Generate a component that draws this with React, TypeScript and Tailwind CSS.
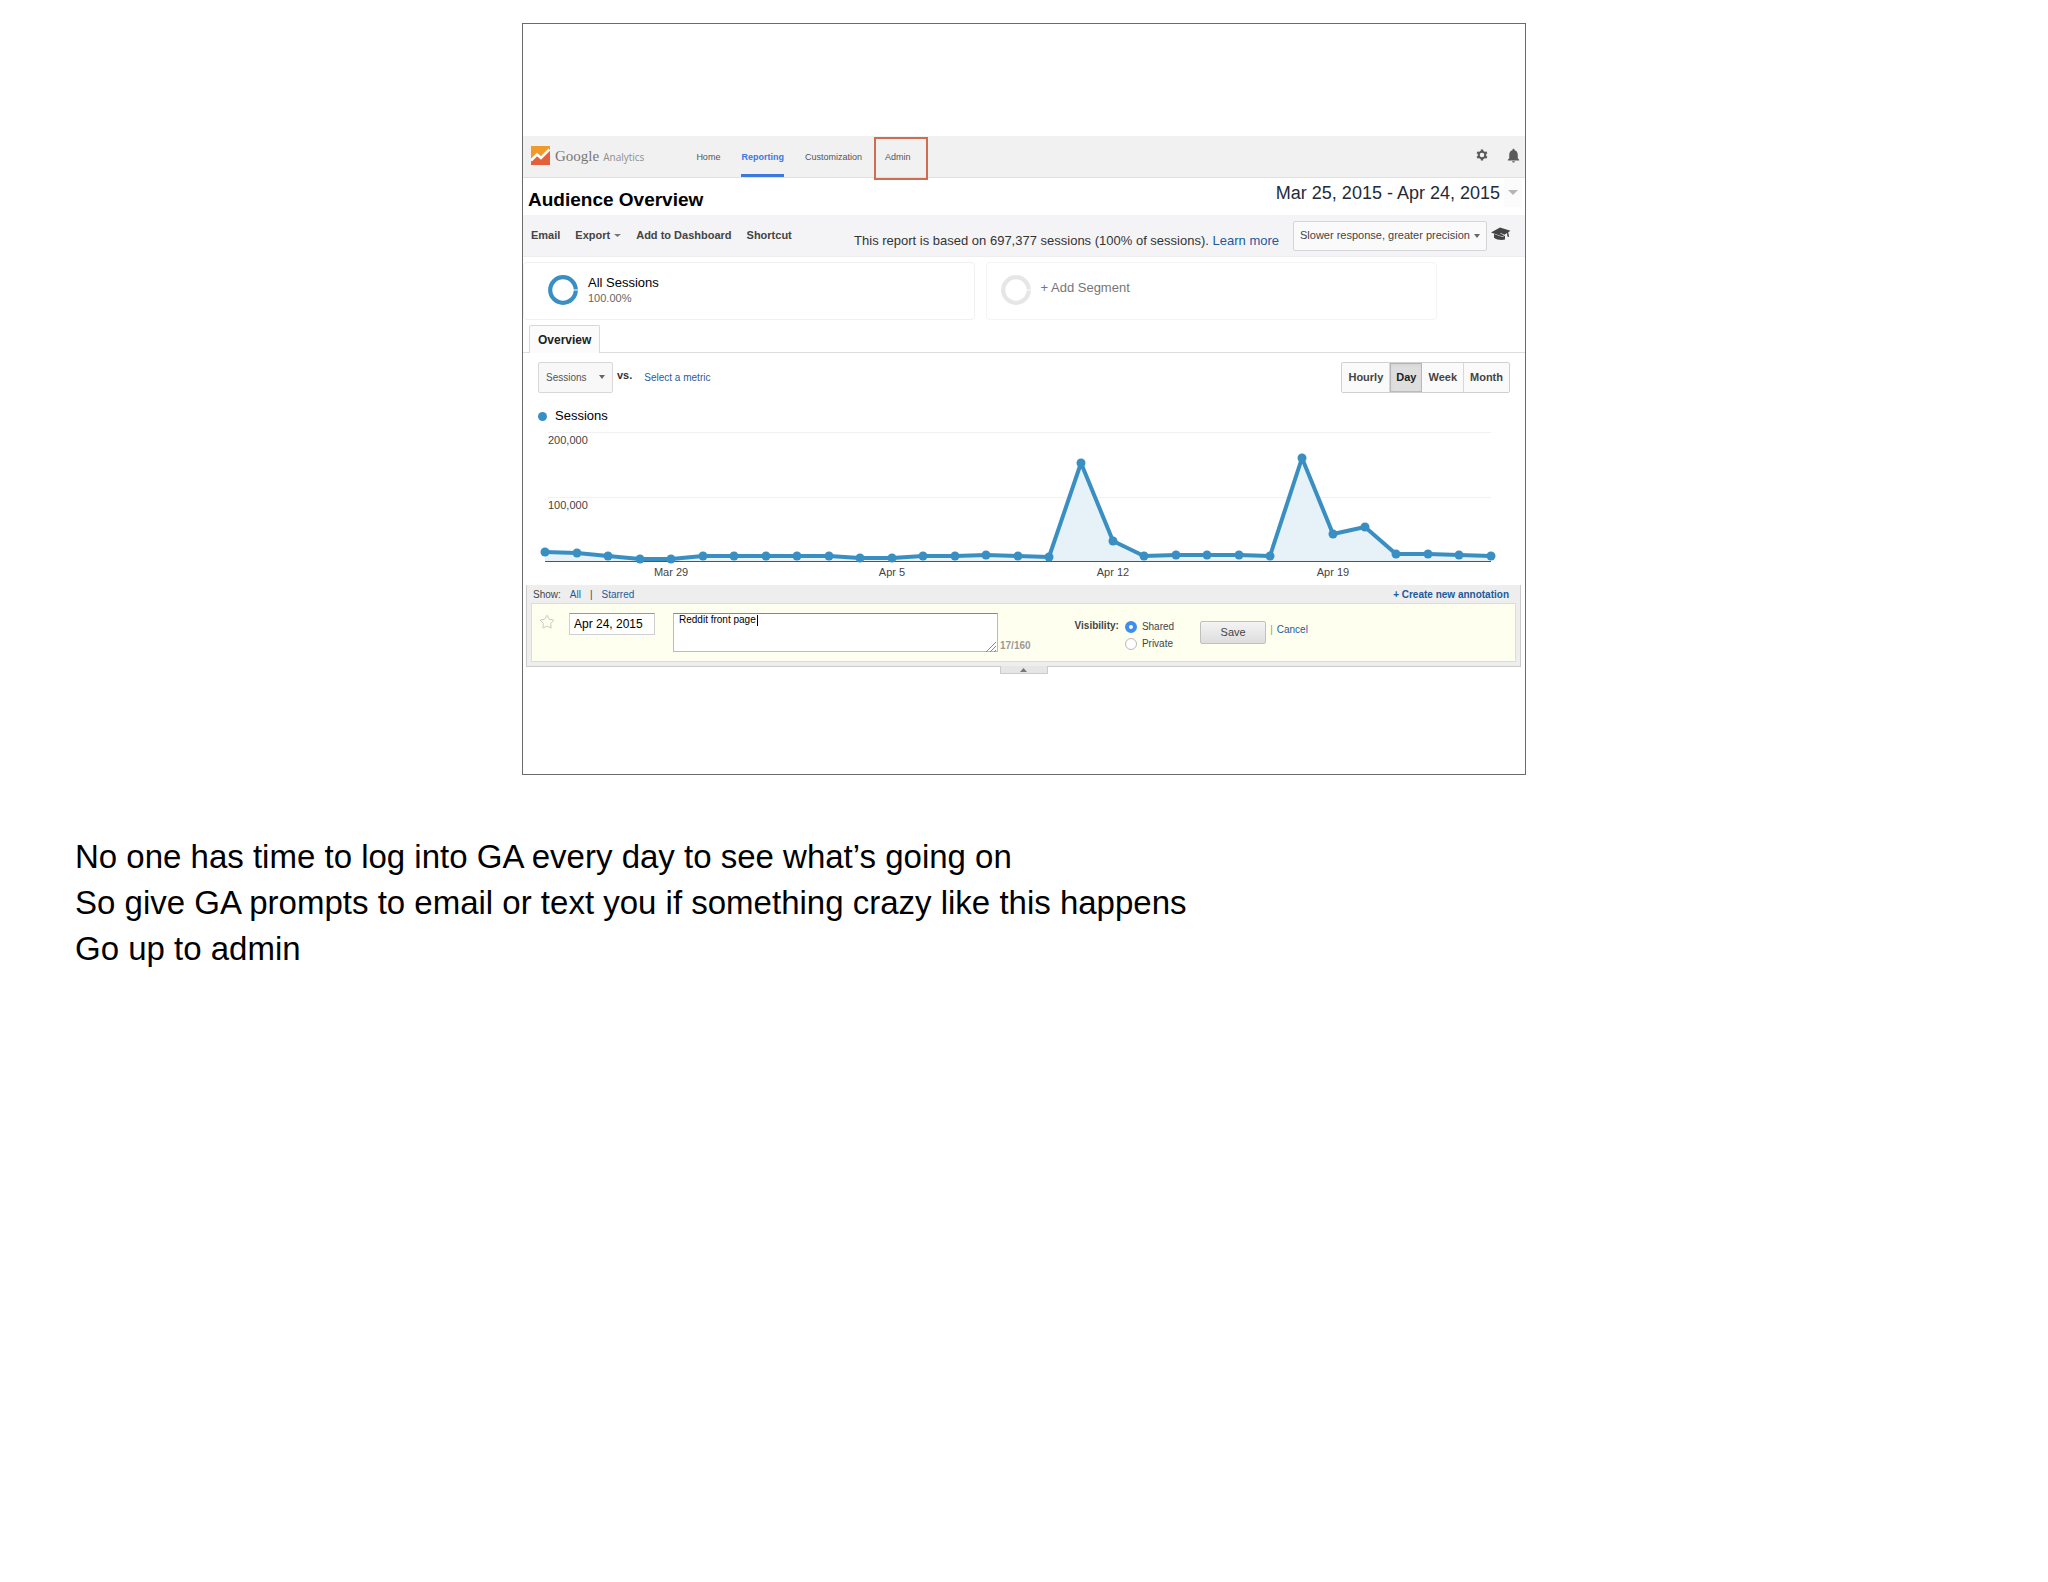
import { Star } from "lucide-react";
import { MdNotifications } from "react-icons/md";

const navItems = [
  { label: "Home", href: "#home" },
  { label: "Reporting", href: "#reporting", active: true },
  { label: "Customization", href: "#customization" },
];

const notes = [
  "No one has time to log into GA every day to see what’s going on",
  "So give GA prompts to email or text you if something crazy like this happens",
  "Go up to admin",
];

// daily sessions in thousands, Mar 25 to Apr 24
const sessions = [
  15, 14, 10, 4, 5, 10, 10, 9, 10, 10, 6, 6, 10, 10, 11, 10, 7, 154, 32, 10, 11, 11, 11, 9, 162, 43, 55, 12, 12, 11, 10,
];

const ticks = [
  { index: 4, label: "Mar 29" },
  { index: 11, label: "Apr 5" },
  { index: 18, label: "Apr 12" },
  { index: 25, label: "Apr 19" },
];

function Caret({ className }: { className: string }) {
  return (
    <svg viewBox="0 0 8 4" className={className} preserveAspectRatio="none" fill="currentColor" aria-hidden="true">
      <path d="M0 0h8L4 4z" />
    </svg>
  );
}

function Logo() {
  return (
    <a href="#top" className="flex items-center gap-[5px] pb-0.5">
      <svg viewBox="0 0 19 19" className="size-[19px]" aria-hidden="true">
        <path d="M0 0h19v19H0z" fill="#f09a2c" />
        <path d="M0 14.500 6 8.500l4 3.500 9-9v16H0z" fill="#e4603a" />
        <path d="M0 14.500 6 8.500l4 3.500 8.500-8.500" fill="none" stroke="#fff" strokeWidth="2.600" />
      </svg>
      <span className="flex items-baseline gap-1 text-[#777777]">
        <span className="font-['Liberation_Serif',serif] text-[15px] leading-5">Google</span>
        <span className="font-['Open_Sans',sans-serif] text-[10px] text-[#8f8f8f]">Analytics</span>
      </span>
    </a>
  );
}

function GearIcon() {
  return (
    <svg viewBox="0 0 12 12" className="size-3" stroke="currentColor" fill="none" aria-hidden="true">
      <circle cx="6" cy="6" r="3.300" strokeWidth="2" />
      <path
        d="M6 .4v2M6 9.600v2M1.150 3.200l1.730 1M9.120 7.800l1.730 1M1.150 8.800l1.730-1M9.120 4.200l1.730-1"
        strokeWidth="2.400"
      />
    </svg>
  );
}

function CapIcon() {
  return (
    <svg viewBox="0 0 20 14" className="h-[14px] w-5" fill="currentColor" aria-hidden="true">
      <path d="M0 5.500 9 .5l10.500 3.200-2.300 1.600 1 4.700-1.800-.6-.4-3.300-2.500 1.600-4-1.600-.3.500 3.800 1.600-1.500 1.300z" />
      <path d="m3 7 8.500 3 2.500-1.600v4.200c-3.500 1-8.500.2-11-1.800z" />
    </svg>
  );
}

function Header() {
  return (
    <header className="flex h-[42px] items-stretch border-b border-[#e0e0e0] bg-[#f1f1f1] pr-[3px] pl-2">
      <Logo />
      <nav className="ml-[52px] flex items-stretch gap-[21px] text-[9px] text-[#555555]">
        {navItems.map((item) => (
          <a
            key={item.label}
            href={item.href}
            className={
              item.active
                ? "flex items-center border-t-5 border-b-3 border-t-transparent border-b-[#3b78e0] font-bold text-[#3b78e0]"
                : "flex items-center pt-0.5"
            }
          >
            {item.label}
          </a>
        ))}
      </nav>
      <a
        href="#admin"
        className="mt-px -mb-[3px] ml-3 flex w-[54px] items-center border-2 border-[#cf6d4e] pb-px pl-[9px] text-[9px] text-[#555555]"
      >
        Admin
      </a>
      <div className="ml-auto flex items-center gap-[17px] pb-[3px] text-[#5a5a5a]">
        <button type="button" aria-label="Settings">
          <GearIcon />
        </button>
        <button type="button" aria-label="Notifications">
          <MdNotifications className="size-[17px]" />
        </button>
      </div>
    </header>
  );
}

function TitleRow() {
  return (
    <div className="flex h-[37px] items-center justify-between pr-[3px] pl-[5px]">
      <h1 className="pt-2 text-[19px] font-bold text-black">Audience Overview</h1>
      <button type="button" className="mb-2 flex items-center gap-1 text-lg text-[#222b3a]">
        Mar 25, 2015 - Apr 24, 2015
        <span className="flex h-7 w-[18px] items-center justify-center bg-[#fbfbfb]">
          <Caret className="h-[5px] w-2.5 text-[#b5b5b5]" />
        </span>
      </button>
    </div>
  );
}

function Toolbar() {
  return (
    <div className="flex h-[42px] items-center border-b border-[#eeeef0] bg-[#f4f4f6] pr-3.5 pl-2">
      <div className="flex items-center gap-[15px] pb-px text-[11px] font-bold text-[#444444]">
        <button type="button">Email</button>
        <button type="button" className="flex items-center gap-1">
          Export
          <Caret className="h-[3px] w-[7px] text-[#777777]" />
        </button>
        <button type="button">Add to Dashboard</button>
        <button type="button">Shortcut</button>
      </div>
      <p className="ml-auto pt-2.5 text-[13px] text-[#333333]">
        This report is based on 697,377 sessions (100% of sessions).{" "}
        <a href="#learn" className="text-[#1c5a9c]">
          Learn more
        </a>
      </p>
      <div className="relative ml-3.5">
        <select
          aria-label="Sampling"
          className="h-[30px] w-[194px] appearance-none rounded-xs border border-[#d5d5d8] bg-[#fafafb] pl-1.5 text-[11px] text-[#444444]"
        >
          <option>Slower response, greater precision</option>
        </select>
        <Caret className="pointer-events-none absolute top-[13px] right-[7px] h-1 w-1.5 text-[#666666]" />
      </div>
      <button type="button" aria-label="Education" className="mb-1 ml-1 text-[#444444]">
        <CapIcon />
      </button>
    </div>
  );
}

function Ring({ color }: { color: string }) {
  return (
    <svg viewBox="0 0 30 30" className="size-[30px]" aria-hidden="true">
      <circle cx="15" cy="15" r="12.800" fill="none" stroke={color} strokeWidth="4.200" />
      <path d="M24 15h6" stroke="#fff" strokeWidth="1" />
    </svg>
  );
}

function Segments() {
  return (
    <div className="grid grid-cols-2 gap-[11px] pt-[5px] pr-[88px]">
      <section className="flex h-[58px] items-center gap-2.5 rounded-sm border border-[#f0eff2] pb-0.5 pl-6">
        <Ring color="#3a8fc2" />
        <div>
          <h2 className="text-[13px] leading-4 text-black">All Sessions</h2>
          <p className="text-[11px] leading-[14px] text-[#666666]">100.00%</p>
        </div>
      </section>
      <button
        type="button"
        className="flex h-[58px] items-center gap-2.5 rounded-sm border border-[#f4f3f6] pb-0.5 pl-3.5 text-[13px] text-[#777777]"
      >
        <Ring color="#e6e5e8" />
        <span className="pb-1">+ Add Segment</span>
      </button>
    </div>
  );
}

function Controls() {
  const periods = ["Hourly", "Day", "Week", "Month"];
  return (
    <div className="flex items-center pt-[9px] pr-[15px] pl-[15px]">
      <div className="relative">
        <select
          aria-label="Metric"
          className="h-[31px] w-[75px] appearance-none rounded-xs border border-[#d8d8d8] bg-[#f8f8f8] pl-[7px] text-[10px] text-[#555555]"
        >
          <option>Sessions</option>
        </select>
        <Caret className="pointer-events-none absolute top-[13px] right-2 h-1 w-1.5 text-[#666666]" />
      </div>
      <span className="ml-1 pb-1 text-[11px] font-bold text-[#333333]">vs.</span>
      <a href="#metric" className="ml-3 text-[10px] text-[#2b5a9c]">
        Select a metric
      </a>
      <div className="ml-auto flex h-[31px] overflow-hidden rounded-xs border border-[#d0d0d0] text-[11px] font-bold text-[#444444]">
        {periods.map((period) => (
          <button
            key={period}
            type="button"
            className={
              period === "Day"
                ? "bg-[#dedede] px-1.5 text-[#222222] inset-shadow-sm inset-ring inset-ring-[#bcbcbc]"
                : "border-r border-[#d8d8d8] bg-[#fafafa] px-1.5 last:border-r-0"
            }
          >
            {period}
          </button>
        ))}
      </div>
    </div>
  );
}

function Chart() {
  const base = 137;
  const points = sessions.map((value, i) => ({
    x: Math.round(22 + i * 31.53),
    y: Math.round(base - value * 0.645),
  }));
  const line = points.map((p) => `${p.x},${p.y}`).join(" ");

  return (
    <figure className="pt-3.5">
      <figcaption className="flex items-center gap-2 pl-[15px] text-[13px] leading-[18px] text-black">
        <span className="size-[9px] rounded-full bg-[#3a8fc2]" />
        Sessions
      </figcaption>
      <svg
        viewBox="0 0 1002 160"
        className="block w-full font-['Liberation_Sans',sans-serif]"
        role="img"
        aria-label="Sessions per day"
      >
        <path d="M25 7.500h943M25 72.500h943" stroke="#f1f1f4" />
        <polygon points={`${points[0].x},${base} ${line} ${points[30].x},${base}`} fill="#e6f1f8" />
        <path d="M22 136.500h946" stroke="#555555" />
        <polyline points={line} fill="none" stroke="#3a8fc2" strokeWidth="4" strokeLinejoin="round" />
        {points.map((p) => (
          <circle key={p.x} cx={p.x} cy={p.y} r="4.500" fill="#3a8fc2" />
        ))}
        <g fontSize="11" fill="#444444">
          <text x="25" y="19">
            200,000
          </text>
          <text x="25" y="84">
            100,000
          </text>
          {ticks.map((tick) => (
            <text key={tick.label} x={points[tick.index].x} y="151" textAnchor="middle">
              {tick.label}
            </text>
          ))}
        </g>
      </svg>
    </figure>
  );
}

function Annotations() {
  return (
    <section className="mr-1 ml-[3px]">
      <div className="border border-t-0 border-[#cccccc] bg-[#eeeeee] px-1 pb-1">
        <div className="flex h-[18px] items-center justify-between pt-px pr-[7px] pl-0.5 text-[10px] text-[#444444]">
          <div className="flex gap-[9px]">
            <span>Show:</span>
            <a href="#all" className="text-[#1c5a9c]">
              All
            </a>
            <span>|</span>
            <a href="#starred" className="text-[#1c5a9c]">
              Starred
            </a>
          </div>
          <a href="#new" className="font-bold text-[#1c5a9c]">
            + Create new annotation
          </a>
        </div>
        <form className="flex h-[59px] items-start border border-[#dcdcdc] bg-[#fffff0] text-[10px] text-[#444444]">
          <button type="button" aria-label="Star" className="mt-2.5 ml-[7px]">
            <Star className="size-4 text-[#c9c9bd]" strokeWidth={1.5} />
          </button>
          <input
            aria-label="Date"
            defaultValue="Apr 24, 2015"
            className="mt-[9px] ml-[14px] h-[22px] w-[86px] border border-[#d0d0d0] border-t-[#999999] bg-white px-1 text-xs text-black"
          />
          <div className="relative mt-[9px] ml-[18px]">
            <textarea
              aria-label="Annotation"
              defaultValue="Reddit front page"
              className="block h-[39px] w-[325px] resize-none border border-[#bbbbbb] border-t-[#888888] bg-white px-[5px] py-0 text-[10px] leading-3 text-black"
            />
            <span className="absolute top-0.5 left-[84px] h-[11px] w-px bg-black" />
            <svg viewBox="0 0 10 10" className="absolute right-0.5 bottom-0 size-2.5" stroke="#888888" aria-hidden="true">
              <path d="M0 10 10 0M4 10l6-6M8 10l2-2" />
            </svg>
          </div>
          <span className="mt-[34px] ml-0.5 font-bold text-[#999999]">17/160</span>
          <fieldset className="mt-[14px] ml-11 flex gap-1.5">
            <span className="text-[10px] leading-4 font-bold">Visibility:</span>
            <div>
              <label className="flex h-[17px] items-center gap-[5px]">
                <input
                  type="radio"
                  name="visibility"
                  defaultChecked
                  className="size-3 appearance-none rounded-full border border-[#b8b8b8] bg-white checked:border-4 checked:border-[#3f8eee]"
                />
                Shared
              </label>
              <label className="flex h-[17px] items-center gap-[5px]">
                <input
                  type="radio"
                  name="visibility"
                  className="size-3 appearance-none rounded-full border border-[#b8b8b8] bg-white checked:border-4 checked:border-[#3f8eee]"
                />
                Private
              </label>
            </div>
          </fieldset>
          <button
            type="button"
            className="mt-[17px] ml-[26px] h-[23px] w-[66px] rounded-xs border border-[#c0c0c0] bg-linear-to-b from-[#f4f4f4] to-[#dddddd] text-[11px]"
          >
            Save
          </button>
          <span className="mt-[18px] ml-1 text-[#999966]">|</span>
          <a href="#cancel" className="mt-[18px] ml-1 text-[#1c5a9c]">
            Cancel
          </a>
        </form>
      </div>
      <button
        type="button"
        aria-label="Collapse annotations"
        className="mx-auto -mt-px flex h-2 w-12 items-center justify-center border border-t-0 border-[#cccccc] bg-[#e6e6e6]"
      >
        <Caret className="h-1 w-[7px] rotate-180 text-[#777777]" />
      </button>
    </section>
  );
}

export default function App() {
  return (
    <main className="min-h-screen bg-white font-['Liberation_Sans',Arial,sans-serif]">
      <div className="px-[75px] pt-[23px]">
        <article className="mx-auto w-full max-w-[1004px] border border-[#6b6b6b] bg-white pt-[112px] pb-[100px]">
          <Header />
          <TitleRow />
          <Toolbar />
          <Segments />
          <div className="mt-[5px] flex border-b border-[#dddddd] pl-1.5">
            <h2 className="-mb-px h-7 rounded-t-xs border border-b-0 border-[#d8d8d8] bg-[#fbfbfb] px-2 text-xs leading-7 font-bold text-[#222222]">
              Overview
            </h2>
          </div>
          <Controls />
          <Chart />
          <Annotations />
        </article>
        <section className="mt-[59px] text-[33px] leading-[46px] text-black">
          {notes.map((note) => (
            <p key={note}>{note}</p>
          ))}
        </section>
      </div>
    </main>
  );
}
